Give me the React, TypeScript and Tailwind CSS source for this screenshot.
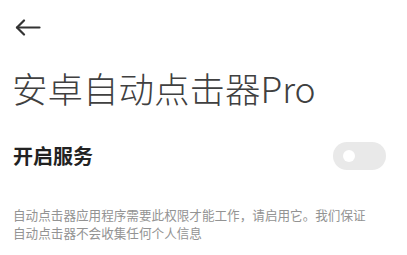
export default function App() {
  return (
    <div className="w-[407px] h-[255px] bg-white overflow-hidden font-['Noto_Sans_CJK_SC',sans-serif]">
      {/* 顶部返回 */}
      <div className="h-[68px] pl-[15px] pt-[19px]">
        <svg width="26" height="17" viewBox="0 0 26 17" fill="none" stroke="#333" strokeWidth="2.2" strokeLinecap="round" strokeLinejoin="round">
          <path d="M24.5 8.5H2" />
          <path d="M9 1.5L2 8.5L9 15.5" />
        </svg>
      </div>

      <h1 className="pl-[12px] text-[35.5px] leading-[40px] font-light text-[#404040]">
        安卓自动点击器Pro
      </h1>

      {/* 开关行 */}
      <div className="mt-[33px] pl-[13px] pr-[21px] flex items-center justify-between h-[30px]">
        <span className="text-[20px] font-bold text-[#222]">开启服务</span>
        <div className="w-[53px] h-[28px] rounded-full bg-[#e9e9e9] flex items-center pl-[10px]">
          <div className="w-[12px] h-[12px] rounded-full bg-white" />
        </div>
      </div>

      <p className="mt-[35px] pl-[13px] text-[12.6px] leading-[18px] text-[#939393]">
        自动点击器应用程序需要此权限才能工作，请启用它。我们保证
        <br />
        自动点击器不会收集任何个人信息
      </p>
    </div>
  );
}
